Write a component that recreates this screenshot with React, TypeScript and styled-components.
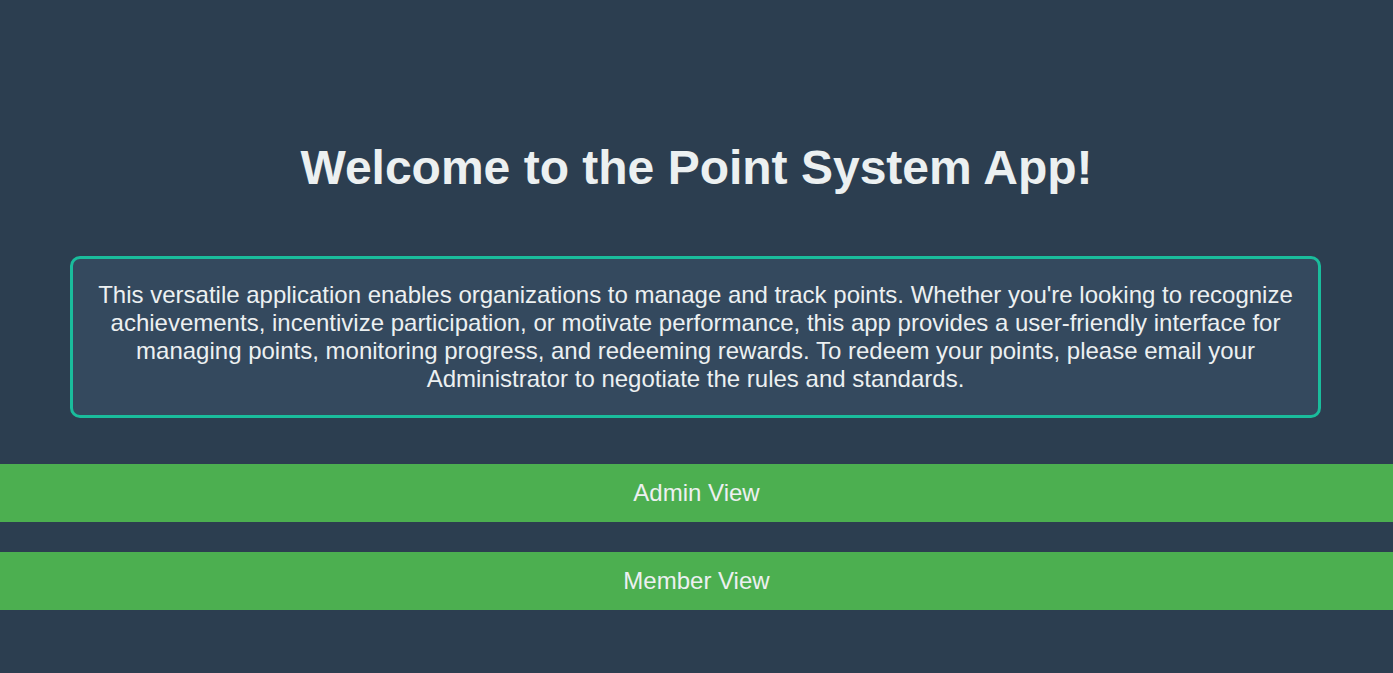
import React from "react";
import styled, { createGlobalStyle } from "styled-components";

const GlobalStyle = createGlobalStyle`
  html, body {
    margin: 0;
    padding: 0;
    background: #2c3e50;
  }
  body {
    font-family: "Liberation Sans", Arial, sans-serif;
    color: #ecf0f1;
  }
`;

const Page = styled.div`
  min-height: 673px;
  background: #2c3e50;
  display: flex;
  flex-direction: column;
  padding-top: 140px;
  box-sizing: border-box;
`;

const Title = styled.h1`
  margin: 0;
  text-align: center;
  font-size: 48px;
  font-weight: 700;
  line-height: 55px;
  color: #ecf0f1;
`;

const Card = styled.div`
  margin: 61px 72px 0 70px;
  padding: 22px 20px;
  border: 3px solid #1abc9c;
  border-radius: 10px;
  background: #34495e;
  text-align: center;
  font-size: 24px;
  line-height: 28px;
  color: #ecf0f1;
`;

const Buttons = styled.div`
  display: flex;
  flex-direction: column;
  gap: 30px;
  margin-top: 46px;
`;

const ViewButton = styled.button`
  display: block;
  width: 100%;
  height: 58px;
  border: none;
  margin: 0;
  padding: 0;
  background: #4caf50;
  color: #ecf0f1;
  font-family: "Liberation Sans", Arial, sans-serif;
  font-size: 24px;
  cursor: pointer;
`;

export default function App() {
  return (
    <>
      <GlobalStyle />
      <Page>
        <Title>Welcome to the Point System App!</Title>
        <Card>
          This versatile application enables organizations to manage and track points. Whether you're looking to
          recognize achievements, incentivize participation, or motivate performance, this app provides a
          user-friendly interface for managing points, monitoring progress, and redeeming rewards. To redeem your
          points, please email your Administrator to negotiate the rules and standards.
        </Card>
        <Buttons>
          <ViewButton>Admin View</ViewButton>
          <ViewButton>Member View</ViewButton>
        </Buttons>
      </Page>
    </>
  );
}
